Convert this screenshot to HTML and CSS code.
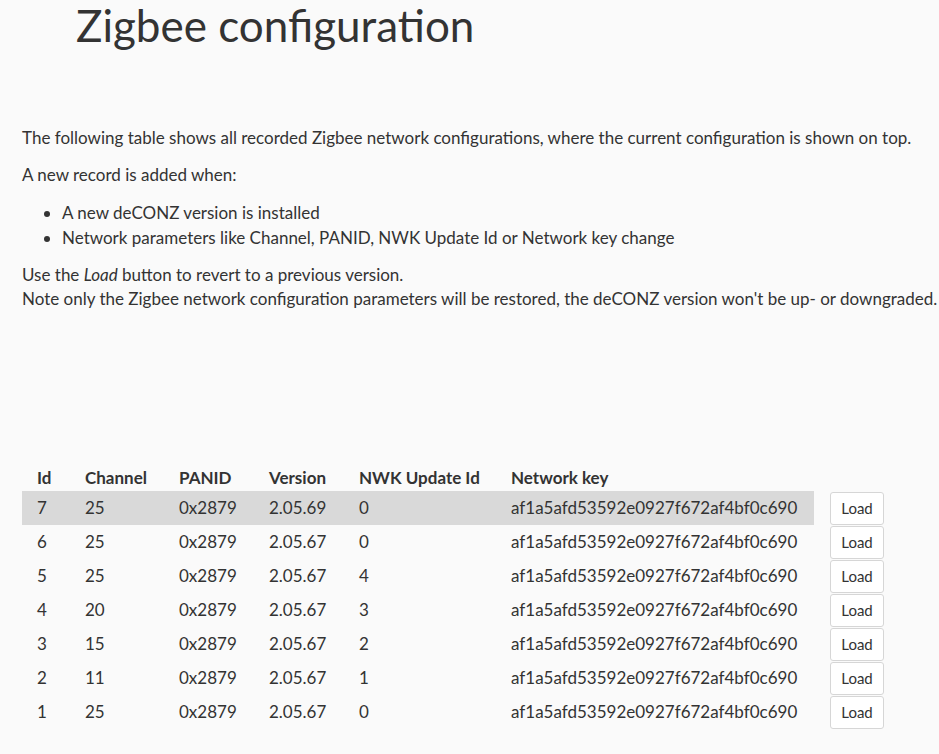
FILE: index.html
```html
<!DOCTYPE html>
<html lang="en">
<head>
<meta charset="utf-8">
<title>Zigbee configuration</title>
<link rel="stylesheet" href="styles.css">
</head>
<body>
<div class="page">
  <h1 class="title">Zigbee configuration</h1>
  <div class="intro">
    <p class="para">The following table shows all recorded Zigbee network configurations, where the current configuration is shown on top.</p>
    <p class="para">A new record is added when:</p>
    <ul class="list">
      <li>A new deCONZ version is installed</li>
      <li>Network parameters like Channel, PANID, NWK Update Id or Network key change</li>
    </ul>
    <p class="para">Use the <em>Load</em> button to revert to a previous version.<br>Note only the Zigbee network configuration parameters will be restored, the deCONZ version won't be up- or downgraded.</p>
  </div>
  <table class="conf">
    <colgroup>
      <col class="c-id"><col class="c-ch"><col class="c-pan"><col class="c-ver"><col class="c-nwk"><col class="c-key"><col class="c-btn">
    </colgroup>
    <thead>
      <tr><th>Id</th><th>Channel</th><th>PANID</th><th>Version</th><th>NWK Update Id</th><th>Network key</th><th></th></tr>
    </thead>
    <tbody>
      <tr class="current"><td>7</td><td>25</td><td>0x2879</td><td>2.05.69</td><td>0</td><td>af1a5afd53592e0927f672af4bf0c690</td><td class="act"><button class="load">Load</button></td></tr>
      <tr><td>6</td><td>25</td><td>0x2879</td><td>2.05.67</td><td>0</td><td>af1a5afd53592e0927f672af4bf0c690</td><td class="act"><button class="load">Load</button></td></tr>
      <tr><td>5</td><td>25</td><td>0x2879</td><td>2.05.67</td><td>4</td><td>af1a5afd53592e0927f672af4bf0c690</td><td class="act"><button class="load">Load</button></td></tr>
      <tr><td>4</td><td>20</td><td>0x2879</td><td>2.05.67</td><td>3</td><td>af1a5afd53592e0927f672af4bf0c690</td><td class="act"><button class="load">Load</button></td></tr>
      <tr><td>3</td><td>15</td><td>0x2879</td><td>2.05.67</td><td>2</td><td>af1a5afd53592e0927f672af4bf0c690</td><td class="act"><button class="load">Load</button></td></tr>
      <tr><td>2</td><td>11</td><td>0x2879</td><td>2.05.67</td><td>1</td><td>af1a5afd53592e0927f672af4bf0c690</td><td class="act"><button class="load">Load</button></td></tr>
      <tr><td>1</td><td>25</td><td>0x2879</td><td>2.05.67</td><td>0</td><td>af1a5afd53592e0927f672af4bf0c690</td><td class="act"><button class="load">Load</button></td></tr>
    </tbody>
  </table>
</div>
</body>
</html>
```
FILE: styles.css
```css
html, body {
  margin: 0;
  padding: 0;
  background: #fafafa;
}
body {
  font-family: Lato, "Open Sans", "Liberation Sans", sans-serif;
  color: #333;
  font-size: 17px;
  line-height: 24px;
}
.page {
  padding: 0 0 0 22px;
}
.title {
  margin: 3px 0 0 0;
  padding-left: 54px;
  font-size: 44px;
  line-height: 44px;
  font-weight: 400;
  color: #333;
}
.intro {
  margin-top: 79px;
}
.para {
  margin: 0 0 13px 0;
}
.list {
  margin: 0 0 13px 0;
  padding-left: 40px;
}
.list li {
  line-height: 25px;
}
.conf {
  margin-top: 154px;
  border-collapse: collapse;
  table-layout: fixed;
  width: 870px;
}
.c-id { width: 48px; }
.c-ch { width: 94px; }
.c-pan { width: 90px; }
.c-ver { width: 90px; }
.c-nwk { width: 152px; }
.c-key { width: 318px; }
.c-btn { width: 78px; }
.conf th {
  text-align: left;
  font-weight: 700;
  padding: 0 0 0 15px;
  height: 26px;
  line-height: 26px;
  vertical-align: middle;
  white-space: nowrap;
}
.conf td {
  padding: 0 0 0 15px;
  height: 34px;
  line-height: 24px;
  vertical-align: middle;
  white-space: nowrap;
}
.conf tr.current td {
  background: #d9d9d9;
}
.conf tr.current td.act {
  background: transparent;
}
.conf td.act {
  padding-left: 16px;
}
.load {
  display: block;
  width: 54px;
  height: 33px;
  margin: 0;
  padding: 0;
  background: #fff;
  border: 1px solid #d6d6d6;
  border-radius: 3px;
  font-family: Lato, "Open Sans", "Liberation Sans", sans-serif;
  font-size: 15px;
  color: #333;
}
```
